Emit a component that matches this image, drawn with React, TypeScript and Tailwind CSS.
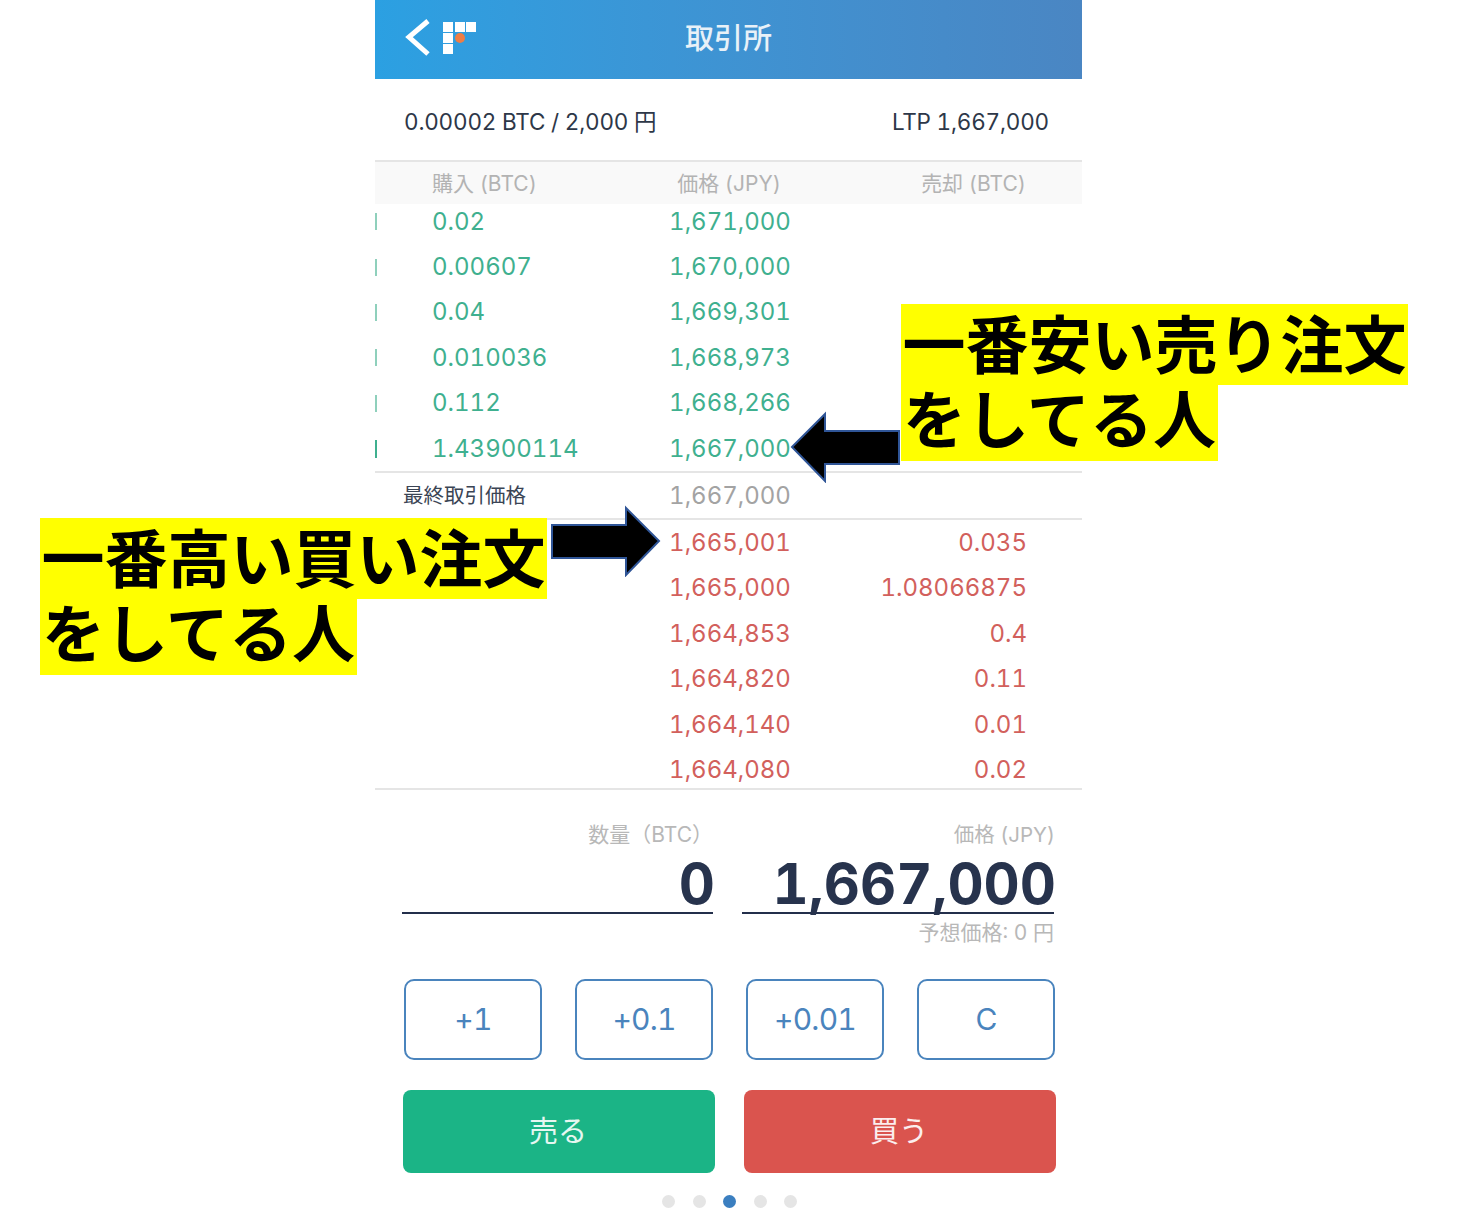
const font = { fontFamily: '"Inter", "Noto Sans CJK JP", sans-serif' };

const asks = [
  ["0.02", "1,671,000"],
  ["0.00607", "1,670,000"],
  ["0.04", "1,669,301"],
  ["0.010036", "1,668,973"],
  ["0.112", "1,668,266"],
  ["1.43900114", "1,667,000"],
];

const bids = [
  ["1,665,001", "0.035"],
  ["1,665,000", "1.08066875"],
  ["1,664,853", "0.4"],
  ["1,664,820", "0.11"],
  ["1,664,140", "0.01"],
  ["1,664,080", "0.02"],
];

function Logo() {
  return (
    <svg width="34" height="36" viewBox="0 0 34 36" className="ml-[12px] -mt-[2px]">
      <rect x="0" y="1" width="10" height="10" fill="#fff" />
      <rect x="12" y="1" width="10" height="10" fill="#fff" />
      <rect x="23" y="1" width="10" height="10" fill="#fff" />
      <rect x="0" y="12" width="10" height="10" fill="#fff" />
      <rect x="0" y="23" width="10" height="10" fill="#fff" />
      <circle cx="17" cy="17" r="5" fill="#ef7d45" />
    </svg>
  );
}

function Note({ line1, className }: { line1: string; className: string }) {
  return (
    <div
      className={`absolute flex w-[507px] flex-col items-start text-[63px] font-bold text-black ${className}`}
      style={{ fontFamily: '"Noto Sans CJK JP", sans-serif' }}
    >
      <div className="flex h-[81px] w-[507px] items-center justify-center whitespace-nowrap bg-[#ffff00] pb-[8px] leading-none">
        {line1}
      </div>
      <div className="flex h-[76px] w-[317px] items-center justify-center whitespace-nowrap bg-[#ffff00] pb-[16px] leading-none">
        をしてる人
      </div>
    </div>
  );
}

export default function App() {
  return (
    <div className="relative h-[1219px] w-[1469px] overflow-hidden bg-white tabular-nums" style={font}>
      <div className="ml-[375px] flex w-[707px] flex-col">
        <header className="relative flex h-[79px] items-center bg-gradient-to-r from-[#2ba0e2] to-[#4a86c3] pl-[30px]">
          <svg width="26" height="40" viewBox="0 0 26 40" fill="none" className="-mt-[3px]">
            <path d="M23 3 L4 19 L23 36" stroke="#fff" strokeWidth="5" />
          </svg>
          <Logo />
          <div className="absolute inset-x-0 pb-[2px] text-center text-[29px] font-medium leading-none text-[#e8f1f8]">取引所</div>
        </header>

        <div className="flex h-[83px] items-center justify-between border-b-2 border-[#e5e5e5] pl-[29px] pr-[33px] pt-[4px] text-[22.5px] tracking-[-0.2px] text-[#2d3748]">
          <span>0.00002 BTC / 2,000 円</span>
          <span>LTP 1,667,000</span>
        </div>

        <div className="relative z-10 grid h-[42px] grid-cols-[245px_218px_1fr] items-center bg-[#f9f9f9] pr-[56px] pt-[1px] text-[21px] text-[#b3b3b3]">
          <span className="pl-[57px]">購入 (BTC)</span>
          <span className="text-center">価格 (JPY)</span>
          <span className="text-right">売却 (BTC)</span>
        </div>

        <div className="relative z-20 -mt-[5px] flex flex-col">
          {asks.map(([qty, price], i) => (
            <div key={price} className="relative flex h-[45.4px] items-center text-[24px] text-[#3fb08f]">
              <span className={i === 5 ? "absolute left-0 h-[18px] w-[2px] bg-[#3fb08f]" : "absolute left-0 h-[17px] w-[2px] bg-[#8fd0bc]"} />
              <span className="w-[245px] pl-[57px]">{qty}</span>
              <span className="w-[218px] pl-[2px] text-center">{price}</span>
            </div>
          ))}
        </div>

        <div className="flex h-[49px] items-center border-y-2 border-[#e5e5e5] pt-[1px] text-[#a3a3a3]">
          <span className="w-[245px] pl-[28px] text-[20.5px] text-[#3a4454]">最終取引価格</span>
          <span className="w-[218px] pl-[2px] text-center text-[24px]">1,667,000</span>
        </div>

        <div className="flex h-[270px] flex-col border-b-2 border-[#e5e5e5]">
          {bids.map(([price, qty]) => (
            <div key={price} className="flex h-[45.4px] shrink-0 items-center text-[24px] text-[#d2605c]">
              <span className="w-[245px]" />
              <span className="w-[218px] pl-[2px] text-center">{price}</span>
              <span className="flex-1 pr-[55px] text-right">{qty}</span>
            </div>
          ))}
        </div>

        <div className="mt-[31px] flex gap-[29px] pl-[27px] pr-[28px]">
          <div className="flex w-[311px] flex-col items-end">
            <span className="text-[21px] leading-[28px] text-[#b8b8b8]">数量（BTC）</span>
            <div className="mt-[3px] flex h-[62px] w-full items-center justify-end border-b-2 border-[#232f4b] pt-[3px] text-[56px] font-bold leading-none text-[#27334d]">
              <span className="translate-x-[2px]">0</span>
            </div>
          </div>
          <div className="flex w-[312px] flex-col items-end">
            <span className="translate-x-[1px] text-[20.5px] leading-[28px] text-[#b8b8b8]">価格 (JPY)</span>
            <div className="mt-[3px] flex h-[62px] w-full items-center justify-end whitespace-nowrap border-b-2 border-[#232f4b] pt-[3px] text-[56px] font-bold leading-none text-[#27334d]">
              <span className="translate-x-[2px]">1,667,000</span>
            </div>
            <span className="mt-[4px] text-[21px] leading-[30px] text-[#b8b8b8]">予想価格: 0 円</span>
          </div>
        </div>

        <div className="ml-[29px] mt-[31px] flex gap-[33px]">
          {["+1", "+0.1", "+0.01", "C"].map((t) => (
            <button
              key={t}
              className="flex h-[81px] w-[138px] items-center justify-center rounded-[10px] border-2 border-[#4a84bd] text-[30px] tracking-[-0.8px] text-[#4a84bd]"
            >
              {t}
            </button>
          ))}
        </div>

        <div className="ml-[28px] mt-[30px] flex gap-[29px]">
          <button className="flex h-[83px] w-[312px] items-center justify-center rounded-[8px] bg-[#1bb486] pr-[2px] text-[29px] text-[#e6f7f1]">売る</button>
          <button className="flex h-[83px] w-[312px] items-center justify-center rounded-[8px] bg-[#da544e] pr-[2px] text-[29px] text-[#fbeeee]">買う</button>
        </div>

        <div className="ml-[2px] mt-[22px] flex justify-center gap-[17.5px]">
          {[0, 1, 2, 3, 4].map((i) => (
            <span key={i} className={i === 2 ? "size-[13px] rounded-full bg-[#3b7fc0]" : "size-[13px] rounded-full bg-[#e5e5e5]"} />
          ))}
        </div>
      </div>

      <Note line1="一番安い売り注文" className="left-[901px] top-[304px]" />
      <Note line1="一番高い買い注文" className="left-[40px] top-[518px]" />

      <svg className="absolute left-[790px] top-[411px]" width="112" height="72" viewBox="0 0 112 72">
        <path d="M2 36 L35 3 L35 20 L109 20 L109 53 L35 53 L35 70 Z" fill="#000" stroke="#2f5597" strokeWidth="2" />
      </svg>
      <svg className="absolute left-[550px] top-[505px]" width="112" height="72" viewBox="0 0 112 72">
        <path d="M109 36 L76 3 L76 20 L2 20 L2 53 L76 53 L76 70 Z" fill="#000" stroke="#2f5597" strokeWidth="2" />
      </svg>
    </div>
  );
}
